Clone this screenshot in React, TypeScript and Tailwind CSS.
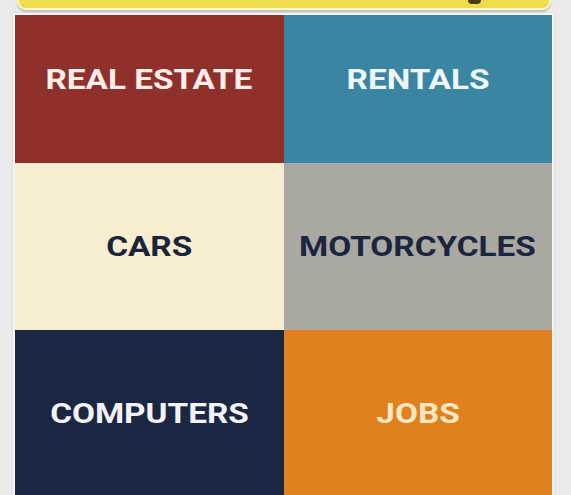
import React from "react";

const cells = [
  { label: "REAL ESTATE", bg: "bg-[#8f302b]", fg: "text-[#fbeeea]", h: "h-[148px] pb-[18px]" },
  { label: "RENTALS", bg: "bg-[#3a86a2]", fg: "text-[#eef6f8]", h: "h-[148px] pb-[18px]" },
  { label: "CARS", bg: "bg-[#f7edd0]", fg: "text-[#1b2438]", h: "h-[167px]" },
  { label: "MOTORCYCLES", bg: "bg-[#a9a8a1]", fg: "text-[#1b2540]", h: "h-[167px]" },
  { label: "COMPUTERS", bg: "bg-[#1a2642]", fg: "text-[#f3f3f5]", h: "h-[167px]" },
  { label: "JOBS", bg: "bg-[#e0801f]", fg: "text-[#f9e8c2]", h: "h-[167px]" },
];

export default function App() {
  return (
    <div
      className="w-[571px] h-[495px] overflow-hidden bg-[#ebebeb] flex flex-col"
      style={{ fontFamily: "Roboto, 'Liberation Sans', sans-serif" }}
    >
      <div className="relative shrink-0 ml-[17px] mr-[20px] h-[10px] rounded-b-[9px] bg-[#efdc4c] border-2 border-t-0 border-[#fcf7c4] shadow-[0_2px_2px_rgba(0,0,0,0.18)]">
        <div className="absolute left-[449px] top-[-4px] w-[13px] h-[8px] rounded-full bg-[#4b3d12]" />
      </div>
      <div className="shrink-0 mt-[3px] ml-[13px] mr-[17px] border-2 border-[#f6f6f6] shadow-[0_0_2px_rgba(0,0,0,0.12)] grid grid-cols-2">
        {cells.map((c) => (
          <div
            key={c.label}
            className={`${c.bg} ${c.h} flex items-center justify-center`}
          >
            <span
              className={`${c.fg} inline-block text-[28px] leading-none font-bold scale-x-[1.19] origin-center`}
            >
              {c.label}
            </span>
          </div>
        ))}
      </div>
    </div>
  );
}
